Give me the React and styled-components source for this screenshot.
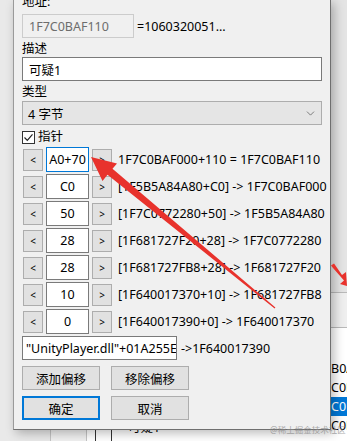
import React from 'react';
import styled, { createGlobalStyle } from 'styled-components';
import { ChevronDown } from 'lucide-react';

const GlobalStyle = createGlobalStyle`
  html, body { margin: 0; padding: 0; }
  body {
    font-family: "Noto Sans", "Noto Sans CJK SC", sans-serif;
    font-size: 12.5px;
    color: #000;
    background: #e9e9e9;
    overflow: hidden;
  }
`;

const Stage = styled.div`
  position: relative;
  width: 347px;
  height: 441px;
  overflow: hidden;
  display: grid;
  grid-template-columns: 13px 318px 16px;
  grid-template-rows: 430px 11px;
  background: #e9e9e9;
`;

const Dialog = styled.div`
  grid-column: 2;
  grid-row: 1;
  position: relative;
  z-index: 1;
  box-sizing: border-box;
  background: #f0f0f0;
  border-left: 1px solid #9a9a9a;
  border-right: 1px solid #6f6f6f;
  border-bottom: 1px solid #6f6f6f;
  box-shadow: 3px 3px 10px rgba(0, 0, 0, 0.28);
  padding: 0 8px;
  display: flex;
  flex-direction: column;
`;

const Label = styled.div`
  height: 16px;
  line-height: 16px;
  margin-top: ${p => p.$top}px;
`;

const Line = styled.div`
  display: flex;
  align-items: center;
  gap: ${p => p.$gap || 0}px;
  margin-top: ${p => p.$top || 0}px;
  white-space: nowrap;
`;

const Field = styled.div`
  box-sizing: border-box;
  height: ${p => p.$h || 24}px;
  width: ${p => p.$w ? p.$w + 'px' : '100%'};
  flex-shrink: 0;
  display: flex;
  align-items: center;
  justify-content: ${p => p.$center ? 'center' : 'flex-start'};
  padding: 0 ${p => p.$center ? 0 : p.$pad ?? 6}px;
  background: ${p => p.$disabled ? '#f0f0f0' : '#fff'};
  color: ${p => p.$disabled ? '#6d6d6d' : '#000'};
  border: 1px solid ${p => p.$focus ? '#0078d7' : p.$disabled ? '#cccccc' : '#7a7a7a'};
  white-space: nowrap;
  overflow: hidden;
`;

const Select = styled.div`
  box-sizing: border-box;
  height: 24px;
  margin-top: 1px;
  display: flex;
  align-items: center;
  justify-content: space-between;
  padding: 0 4px 0 5px;
  background: #e5e5e5;
  border: 1px solid #adadad;
`;

const CheckBox = styled.span`
  box-sizing: border-box;
  width: 13px;
  height: 13px;
  border: 1px solid #333;
  background: #fff;
  display: flex;
  align-items: center;
  justify-content: center;
`;

const Rows = styled.div`
  display: flex;
  flex-direction: column;
  gap: 2px;
  margin-top: 2px;
`;

const Step = styled.button`
  box-sizing: border-box;
  width: 20px;
  height: 22px;
  padding: 0;
  margin-left: ${p => p.$ml || 0}px;
  flex-shrink: 0;
  background: #e1e1e1;
  border: 1px solid #adadad;
  font-family: "Noto Sans", sans-serif;
  font-size: 10px;
  color: #000;
  line-height: 20px;
`;

const PathText = styled.span`
  margin-left: 3px;
  white-space: nowrap;
`;

const Buttons = styled.div`
  display: flex;
  gap: 11px;
  margin-top: 6px;
`;

const Button = styled.button`
  box-sizing: border-box;
  width: 78px;
  height: 24px;
  padding: 0;
  background: #e1e1e1;
  border: ${p => p.$default ? '2px solid #0078d7' : '1px solid #adadad'};
  font-family: "Noto Sans", "Noto Sans CJK SC", sans-serif;
  font-size: 12.5px;
  color: #000;
`;

const RightPane = styled.div`
  grid-column: 3;
  grid-row: 1 / 3;
  display: flex;
  flex-direction: column;
  background: #e6e6e6;
  overflow: hidden;
`;

const Band = styled.div`
  height: ${p => p.$h}px;
  flex-shrink: 0;
  background: ${p => p.$bg || 'transparent'};
  border-bottom: ${p => p.$rule ? '1px solid #b9b9b9' : 'none'};
`;

const List = styled.div`
  flex: 1;
  background: #fff;
  padding-top: 31px;
`;

const ListItem = styled.div`
  height: 19px;
  line-height: 19px;
  white-space: nowrap;
  background: ${p => p.$sel ? '#0078d7' : 'transparent'};
  color: ${p => p.$sel ? '#fff' : '#000'};
`;

const BottomStrip = styled.div`
  grid-column: 1 / 3;
  grid-row: 2;
  display: flex;
  background: #e9e9e9;
`;

const Cell = styled.div`
  width: ${p => p.$w}px;
  flex-shrink: 0;
  border-right: 1px solid #c4c4c4;
  background: ${p => p.$bg};
`;

const TreeArea = styled.div`
  flex: 1;
  display: flex;
  gap: 16px;
  padding-left: 8px;
  background: #fff;
`;

const SmallBox = styled.span`
  box-sizing: border-box;
  width: 17px;
  height: 17px;
  margin-top: -3px;
  border: 1px solid #333;
  background: #fff;
`;

const Hidden = styled.span`
  margin-top: -10px;
  line-height: 16px;
`;

const Watermark = styled.div`
  position: absolute;
  left: 270px;
  top: 423px;
  z-index: 3;
  font-size: 8.5px;
  color: rgba(140, 140, 140, 0.75);
  white-space: nowrap;
`;

const Overlay = styled.svg`
  position: absolute;
  inset: 0;
  z-index: 2;
  pointer-events: none;
`;

const rows = [
  { off: 'A0+70', text: '1F7C0BAF000+110 = 1F7C0BAF110', focus: true },
  { off: 'C0', text: '[1F5B5A84A80+C0] -> 1F7C0BAF000' },
  { off: '50', text: '[1F7C0772280+50] -> 1F5B5A84A80' },
  { off: '28', text: '[1F681727F20+28] -> 1F7C0772280' },
  { off: '28', text: '[1F681727FB8+28] -> 1F681727F20' },
  { off: '10', text: '[1F640017370+10] -> 1F681727FB8' },
  { off: '0', text: '[1F640017390+0] -> 1F640017370' },
];

export default function App() {
  return (
    <Stage>
      <GlobalStyle />
      <Dialog>
        <Label $top={-6}>地址:</Label>
        <Line $top={4} $gap={3}>
          <Field $w={112} $disabled>1F7C0BAF110</Field>
          <span>=1060320051...</span>
        </Line>
        <Label $top={3}>描述</Label>
        <Field>可疑1</Field>
        <Label $top={3}>类型</Label>
        <Select>
          <span>4 字节</span>
          <ChevronDown size={13} strokeWidth={1.2} color="#444" />
        </Select>
        <Line $top={4} $gap={3}>
          <CheckBox>
            <svg width="11" height="11" viewBox="0 0 11 11">
              <path d="M1.5 5.5 L4.3 8.3 L9.5 2.3" fill="none" stroke="#222" strokeWidth="1.2" />
            </svg>
          </CheckBox>
          <span style={{ lineHeight: '16px' }}>指针</span>
        </Line>
        <Rows>
          {rows.map((r, i) => (
            <Line key={i} $gap={3}>
              <Step $ml={1}>&lt;</Step>
              <Field $w={43} $h={25} $center $focus={r.focus}>{r.off}</Field>
              <Step>&gt;</Step>
              <PathText>{r.text}</PathText>
            </Line>
          ))}
        </Rows>
        <Line $top={2} $gap={4}>
          <Field $w={155} $pad={3}>"UnityPlayer.dll"+01A255E</Field>
          <span>-&gt;1F640017390</span>
        </Line>
        <Buttons>
          <Button>添加偏移</Button>
          <Button>移除偏移</Button>
        </Buttons>
        <Buttons>
          <Button $default>确定</Button>
          <Button>取消</Button>
        </Buttons>
      </Dialog>

      <RightPane>
        <Band $h={292} $bg="#e4e4e4" $rule />
        <Band $h={34} $bg="#efefef" $rule />
        <List>
          <ListItem>B0A</ListItem>
          <ListItem>C0E</ListItem>
          <ListItem $sel>C0E</ListItem>
          <ListItem>C0E</ListItem>
        </List>
      </RightPane>

      <BottomStrip>
        <Cell $w={50} $bg="#e9e9e9" />
        <Cell $w={35} $bg="#f0f0f0" />
        <TreeArea>
          <SmallBox />
          <Hidden>可疑1</Hidden>
        </TreeArea>
      </BottomStrip>

      <Watermark>@稀土掘金技术社区</Watermark>

      <Overlay width="347" height="441" viewBox="0 0 347 441">
        <polygon
          fill="#e8322c"
          points="91,157 117,163.5 112.5,168.8 275.4,307.6 274.6,308.4 107.5,174.8 102.5,181"
        />
        <polygon
          fill="#e8322c"
          points="331,265.5 334,263.5 342,275 346,272 347,286 340,284 344,280.5 333,268"
        />
      </Overlay>
    </Stage>
  );
}
